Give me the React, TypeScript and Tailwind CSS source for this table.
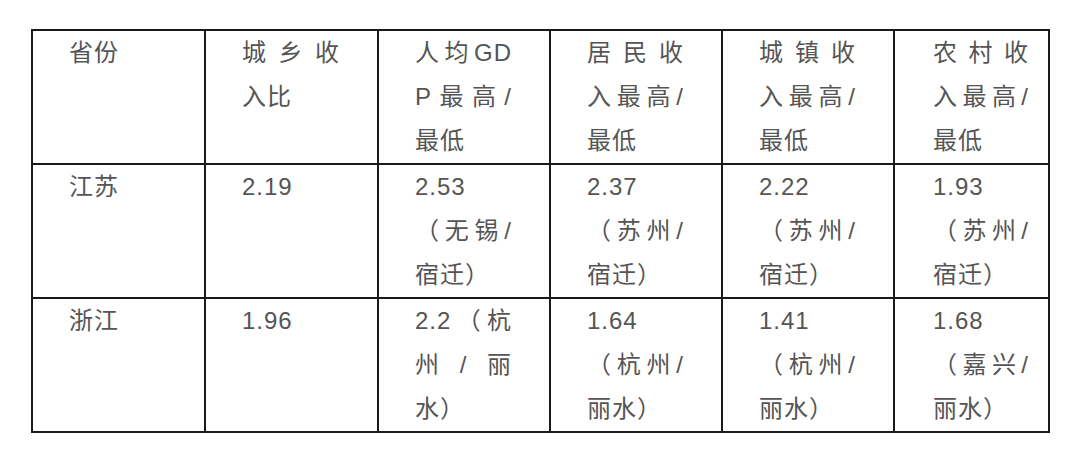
const HEADERS = [
  "省份",
  "城乡收入比",
  "人均GDP最高/最低",
  "居民收入最高/最低",
  "城镇收入最高/最低",
  "农村收入最高/最低",
];

const ROWS: string[][] = [
  ["江苏", "2.19", "2.53（无锡/宿迁）", "2.37（苏州/宿迁）", "2.22（苏州/宿迁）", "1.93（苏州/宿迁）"],
  ["浙江", "1.96", "2.2（杭州/丽水）", "1.64（杭州/丽水）", "1.41（杭州/丽水）", "1.68（嘉兴/丽水）"],
];

const COL_WIDTHS = ["w-[173px]", "w-[173px]", "w-[172px]", "w-[172px]", "w-[172px]", "w-[155px]"];

const CELL =
  "border-2 border-[#1a1a1a] align-top pl-[36px] pr-[37px] py-0 font-normal leading-[44px] text-[24px] tracking-[1px] text-justify break-all [text-spacing-trim:space-all] text-[#555555]";
const LAST_CELL =
  "border-2 border-[#1a1a1a] align-top pl-[38px] pr-[19px] py-0 font-normal leading-[44px] text-[24px] tracking-[1px] text-justify break-all [text-spacing-trim:space-all] text-[#555555]";

function Cell({ text, last }: { text: string; last: boolean }) {
  return <td className={last ? LAST_CELL : CELL}>{text}</td>;
}

export default function App() {
  return (
    <div
      lang="zh-CN"
      className="w-[1080px] h-[453px] bg-white pt-[29px] pl-[31px] font-['Liberation_Sans','Noto_Sans_CJK_SC',sans-serif]"
    >
      <table className="table-fixed border-collapse w-[1017px]">
        <colgroup>
          {COL_WIDTHS.map((w, i) => (
            <col key={i} className={w} />
          ))}
        </colgroup>
        <tbody>
          <tr>
            {HEADERS.map((h, i) => (
              <Cell key={i} text={h} last={i === HEADERS.length - 1} />
            ))}
          </tr>
          {ROWS.map((row, r) => (
            <tr key={r}>
              {row.map((c, i) => (
                <Cell key={i} text={c} last={i === row.length - 1} />
              ))}
            </tr>
          ))}
        </tbody>
      </table>
    </div>
  );
}
